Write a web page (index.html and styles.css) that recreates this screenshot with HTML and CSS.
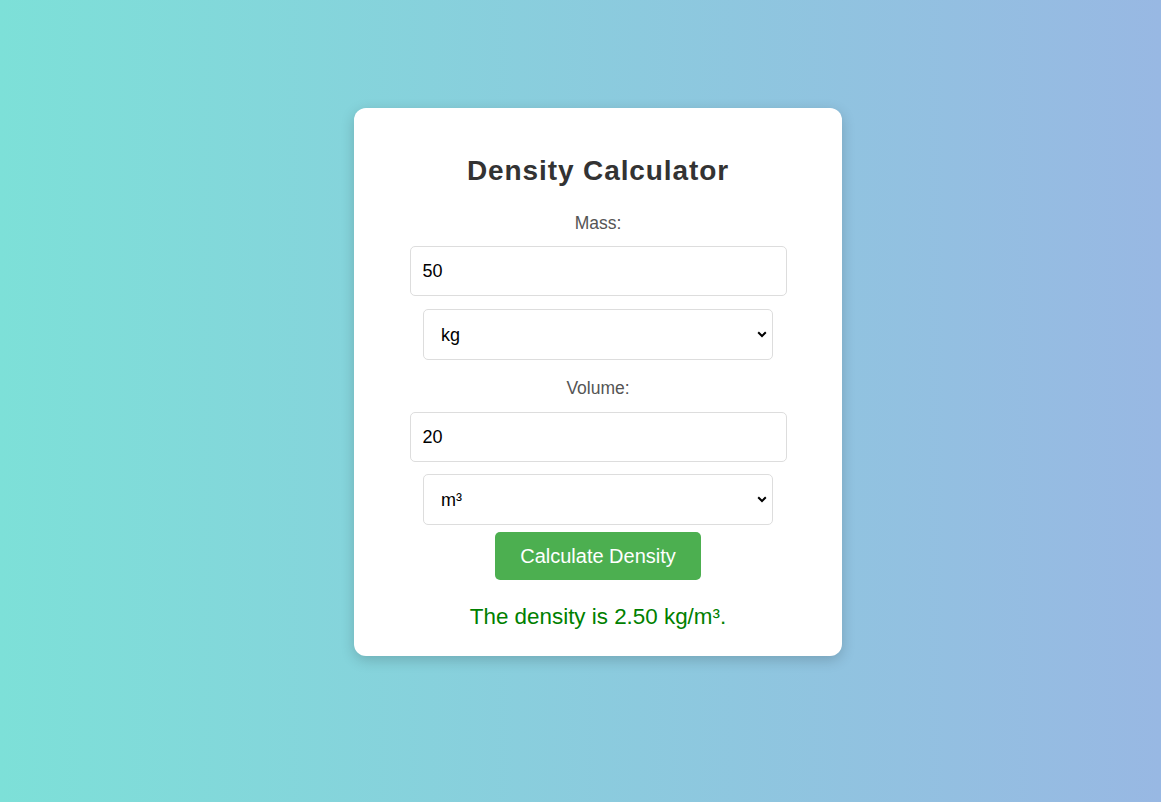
FILE: index.html
```html
<!DOCTYPE html>
<html lang="en">
<head>
<meta charset="utf-8">
<title>Density Calculator</title>
<link rel="stylesheet" href="styles.css">
</head>
<body>
<main class="page">
  <section class="card">
    <h1 class="title">Density Calculator</h1>
    <label class="label" for="mass">Mass:</label>
    <input class="field" id="mass" type="text" value="50">
    <div class="select-wrap">
      <select class="select">
        <option>kg</option>
      </select>
      <svg class="chev" width="10" height="7" viewBox="0 0 10 7"><path d="M1.2 1.3 L5 5 L8.8 1.3" fill="none" stroke="#000" stroke-width="2"/></svg>
    </div>
    <label class="label label-volume" for="vol">Volume:</label>
    <input class="field field-volume" id="vol" type="text" value="20">
    <div class="select-wrap select-volume">
      <select class="select">
        <option>m³</option>
      </select>
      <svg class="chev" width="10" height="7" viewBox="0 0 10 7"><path d="M1.2 1.3 L5 5 L8.8 1.3" fill="none" stroke="#000" stroke-width="2"/></svg>
    </div>
    <button class="btn" type="button">Calculate Density</button>
    <p class="result">The density is 2.50 kg/m³.</p>
  </section>
</main>
</body>
</html>
```
FILE: styles.css
```css
html, body {
  margin: 0;
  height: 100%;
}
body {
  background: linear-gradient(to right, #7de0d8, #98b8e3);
  font-family: "Liberation Sans", Arial, sans-serif;
}
.page {
  display: flex;
  justify-content: center;
  align-items: flex-start;
  padding: 108px 0 0 35px;
  box-sizing: border-box;
  height: 100%;
}
.card {
  width: 488px;
  height: 548px;
  box-sizing: border-box;
  background: #fff;
  border-radius: 12px;
  box-shadow: 0 4px 14px rgba(0, 0, 0, 0.18);
  display: flex;
  flex-direction: column;
  align-items: center;
  padding-top: 47px;
}
.title {
  margin: 0;
  font-size: 28px;
  line-height: 32px;
  letter-spacing: 0.9px;
  font-weight: bold;
  color: #333;
}
.label {
  margin-top: 26px;
  font-size: 17.5px;
  line-height: 20px;
  color: #555;
}
.label-volume {
  margin-top: 18px;
}
.field {
  margin-top: 13px;
  width: 377px;
  height: 50px;
  box-sizing: border-box;
  border: 1px solid #ddd;
  border-radius: 5px;
  padding: 0 12px;
  font-family: inherit;
  font-size: 18px;
  color: #000;
  background: #fff;
  outline: none;
}
.field-volume {
  margin-top: 14px;
}
.select-wrap {
  position: relative;
  margin-top: 13px;
  width: 350px;
  height: 51px;
}
.select-volume {
  margin-top: 12px;
}
.select {
  appearance: none;
  -webkit-appearance: none;
  width: 100%;
  height: 100%;
  box-sizing: border-box;
  border: 1px solid #ddd;
  border-radius: 5px;
  padding: 0 17px;
  font-family: inherit;
  font-size: 18px;
  color: #000;
  background: #fff;
  outline: none;
}
.chev {
  position: absolute;
  right: 6px;
  top: 22px;
  pointer-events: none;
}
.btn {
  margin-top: 7px;
  width: 206px;
  height: 48px;
  border: none;
  border-radius: 5px;
  background: #4caf50;
  color: #fff;
  font-family: inherit;
  font-size: 20px;
}
.result {
  margin: 24px 0 0;
  font-size: 22.4px;
  line-height: 26px;
  color: #008000;
}
```
